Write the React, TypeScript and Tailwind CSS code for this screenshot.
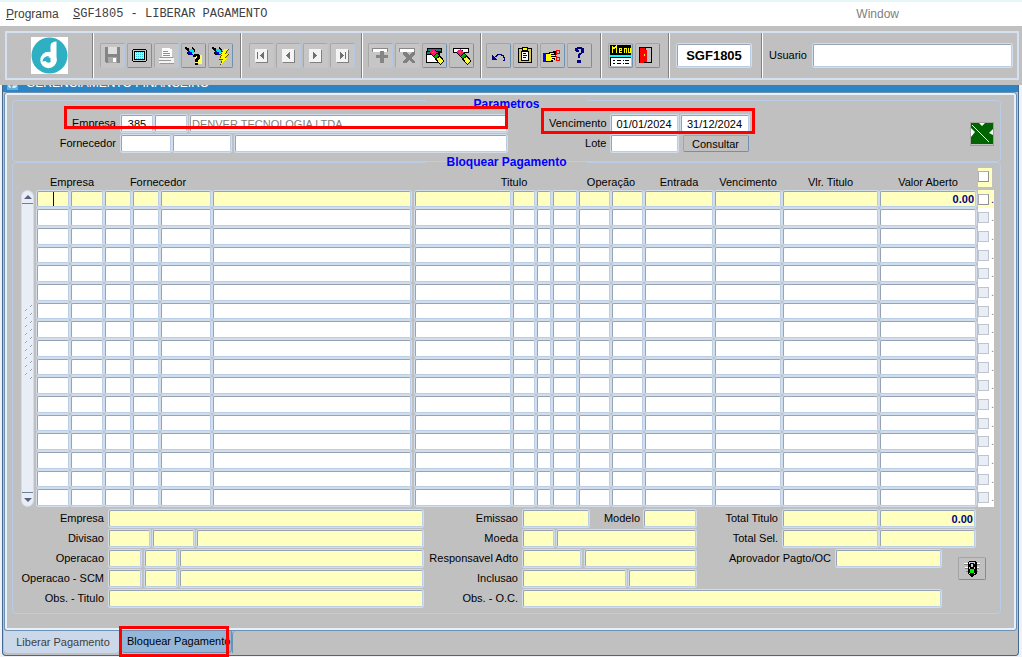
import React from "react";

const fieldBase =
  "block min-w-0 rounded-[2px] border border-t-[#96a3b4] border-l-[#96a3b4] border-r-[#b9cde6] border-b-[#b9cde6] shadow-[0_0_0_1px_#d2deec] px-px text-[11px] leading-3 outline-none";

type FieldProps = {
  id?: string;
  label?: string;
  className?: string;
  value?: string;
};

// white input of the parameters area
function Field({ id, label, className = "", value = "" }: FieldProps) {
  return (
    <input
      id={id}
      aria-label={label}
      defaultValue={value}
      className={`${fieldBase} h-[17px] bg-white ${className}`}
    />
  );
}

// yellow read only input
function Info({ id, label, className = "", value = "" }: FieldProps) {
  return (
    <input
      id={id}
      aria-label={label}
      readOnly
      defaultValue={value}
      className={`${fieldBase} h-[17px] bg-[#ffffc0] ${className}`}
    />
  );
}

function Label({ htmlFor, className = "", children }: { htmlFor: string; className?: string; children: React.ReactNode }) {
  return (
    <label htmlFor={htmlFor} className={`shrink-0 text-right whitespace-nowrap ${className}`}>
      {children}
    </label>
  );
}

function ToolButton({ label, disabled, children }: { label: string; disabled?: boolean; children: React.ReactNode }) {
  return (
    <button
      aria-label={label}
      disabled={disabled}
      className={
        disabled
          ? "h-[25px] w-[25px] shrink-0 rounded-[2px] border border-t-[#a8a8a8] border-l-[#a8a8a8] border-r-[#b4c8e2] border-b-[#b4c8e2] bg-[#c6c6c6]"
          : "h-[25px] w-[25px] shrink-0 rounded-[2px] border border-t-[#a4a4a4] border-l-[#a4a4a4] border-r-[#6d91b5] border-b-[#6d91b5] bg-[#c0c0c0]"
      }
    >
      <svg viewBox="0 0 23 23" className="block h-[23px] w-[23px]" shapeRendering="crispEdges">
        {children}
      </svg>
    </button>
  );
}

function Group({ className = "", children }: { className?: string; children: React.ReactNode }) {
  return (
    <div className={`flex items-center gap-0.5 border-r border-r-[#808080] shadow-[1px_0_0_#ffffff] ${className}`}>
      {children}
    </div>
  );
}

function NavIcon({ d }: { d: string }) {
  return (
    <>
      <rect x="6" y="6" width="12" height="13" fill="#808080" />
      <rect x="5" y="5" width="12" height="13" fill="#f4f4f4" />
      <path d={d} fill="#707070" />
    </>
  );
}

function Torch() {
  return (
    <>
      <path d="M3 3h2v1h2v2h2v1h-4v-1h-1v-1h-1z" fill="#000" />
      <path d="M7 5h4v1h1v3h-3v-1h-2z" fill="#00e0f0" />
      <path d="M6 7h2v1h2v2h1v1h-3v-1h-2z" fill="#0000d0" />
      <path d="M10 3h1v1h1v1h1v3h-1v-2h-1v-1h-1zM5 8h1v2h2v1h-2v-1h-1z" fill="#000" />
    </>
  );
}

function Pencil() {
  return (
    <>
      <path d="M9.500 7.500l10 11.500" stroke="#000" strokeWidth="6" />
      <path d="M8.500 6.500l3.500 4" stroke="#ff1080" strokeWidth="5" />
      <path d="M10 8l1 1" stroke="#ff5020" strokeWidth="2" />
      <path d="M12.500 11l2 2.300" stroke="#00b000" strokeWidth="4" />
      <path d="M15 14l4 4.600" stroke="#ffff30" strokeWidth="4" />
    </>
  );
}

function Toolbar() {
  return (
    <div className="pt-[5px] pr-[3px] pb-[5px] pl-[5px]">
      <div className="flex h-[49px] border-2 border-[#d5e1f0]">
        <Group className="w-[86px] shrink-0 justify-center">
          <svg viewBox="0 0 37 37" className="h-[37px] w-[37px]">
            <rect width="37" height="37" fill="#fff" />
            <circle cx="18.5" cy="18.5" r="18" fill="#2fafc2" />
            <path d="M19.500 9c0-3 2-4.500 6-4.500v20h-6z" fill="#fff" />
            <circle cx="17.500" cy="23" r="5.500" fill="none" stroke="#fff" strokeWidth="5.500" />
            <path d="M11.500 24.500c.5-4 3.500-5.500 7-5.500-2 1-2.500 2-3 5z" fill="#2fafc2" />
          </svg>
        </Group>
        <Group className="w-[148px] shrink-0 pl-[7px]">
          <ToolButton label="Salvar" disabled>
            <path d="M4 3h15v16h-14v-1h-1z" fill="#858585" />
            <rect x="7" y="3" width="9" height="7" fill="#dedede" />
            <rect x="7" y="13" width="9" height="6" fill="#aaa" />
            <rect x="12" y="14" width="3" height="4" fill="#fff" />
          </ToolButton>
          <ToolButton label="Tela">
            <path d="M5 5h13v1h1v11h-1v1h-13v-1h-1v-11h1z" fill="#000" />
            <rect x="5" y="6" width="13" height="11" fill="#c8c8c8" />
            <rect x="6" y="7" width="11" height="9" fill="#000" />
            <rect x="7" y="8" width="9" height="7" fill="#aff" />
            <path
              d="M8 8.500h1m1 0h1m1 0h1m1 0h1M8 10.500h1m1 0h1m1 0h1m1 0h1M8 12.500h1m1 0h1m1 0h1m1 0h1M8 14.500h1m1 0h1m1 0h1m1 0h1"
              stroke="#30c8e0"
            />
          </ToolButton>
          <ToolButton label="Imprimir" disabled>
            <path d="M7 4h8v1h2v8h-10z" fill="#fff" />
            <path d="M8 7.500h5M8 9.500h7M8 11.500h7" stroke="#909090" />
            <path d="M5 13h13v1h1v5h-15v-5h1z" fill="#f4f4f4" />
            <path d="M5 13.500h13M4 16.500h12M5 19.500h14" stroke="#999" />
          </ToolButton>
          <ToolButton label="Entrar consulta">
            <Torch />
            <path d="M13 11h7v9h-7z" fill="#ffff60" />
            <path d="M11 11h1v-1h5v1h1v4h-1v1h-1v2h-3v-3h1v-1h1v-2h-1v1h-3zM13 19h3v2h-3z" fill="#000" />
          </ToolButton>
          <ToolButton label="Executar consulta">
            <Torch />
            <path d="M15 5h5l-3 5h3l-3 4h2l-8 7 2-5h-3l2-5h-1z" fill="#604800" />
            <path d="M15 5h4l-3 5h3l-3 4h2l-6 6 2-5h-3l2-4h-1z" fill="#ff0" />
          </ToolButton>
        </Group>
        <Group className="w-[121px] shrink-0 pl-[8px]">
          <ToolButton label="Primeiro" disabled>
            <NavIcon d="M7 8h1v7h-1zM13 8h1v7h-1v-1h-1v-1h-1v-1h-1v-1h1v-1h1v-1h1z" />
          </ToolButton>
          <ToolButton label="Anterior" disabled>
            <NavIcon d="M12 8h1v7h-1v-1h-1v-1h-1v-1h-1v-1h1v-1h1v-1h1z" />
          </ToolButton>
          <ToolButton label="Proximo" disabled>
            <NavIcon d="M9 8h1v1h1v1h1v1h1v1h-1v1h-1v1h-1v1h-1z" />
          </ToolButton>
          <ToolButton label="Ultimo" disabled>
            <NavIcon d="M9 8h1v1h1v1h1v1h1v1h-1v1h-1v1h-1v1h-1zM14 8h1v7h-1z" />
          </ToolButton>
        </Group>
        <Group className="w-[119px] shrink-0 pl-[6px]">
          <ToolButton label="Inserir registro" disabled>
            <rect x="3" y="4" width="16" height="4" fill="#888" />
            <rect x="4" y="5" width="14" height="3" fill="#fff" />
            <path d="M11 7h4v4h4v3h-4v5h-4v-5h-4v-3h4z" fill="#858585" />
          </ToolButton>
          <ToolButton label="Remover registro" disabled>
            <rect x="3" y="4" width="16" height="4" fill="#888" />
            <rect x="4" y="5" width="14" height="3" fill="#fff" />
            <path d="M7 8h3l3 3 3-3h3v2l-4 4 4 4v1h-3l-3-3-3 3h-3v-2l3-3-3-3z" fill="#808080" />
          </ToolButton>
          <ToolButton label="Limpar bloco">
            <path d="M4 4h15v5h-2v10h-14v-12h1z" fill="#000" />
            <rect x="5" y="5" width="13" height="2" fill="#178080" />
            <rect x="4" y="8" width="11" height="2" fill="#178080" />
            <path d="M4 11h11v7h-11z" fill="#fff" />
            <Pencil />
          </ToolButton>
          <ToolButton label="Limpar registro">
            <rect x="3" y="4" width="16" height="5" fill="#000" />
            <rect x="4" y="5" width="14" height="3" fill="#fff" />
            <Pencil />
          </ToolButton>
        </Group>
        <Group className="w-[120px] shrink-0 pl-[5px]">
          <ToolButton label="Desfazer">
            <path d="M5 11h1v1h1v1h1v1h1v1h1v1h-5z" fill="#000080" />
            <path d="M8 12.500h1v-1h1v-1h4v1h2v2h1v3h-1" fill="none" stroke="#000080" />
          </ToolButton>
          <ToolButton label="Colar">
            <rect x="4" y="4" width="14" height="15" fill="#000" />
            <rect x="5" y="5" width="12" height="13" fill="#d8c850" />
            <rect x="8" y="3" width="6" height="4" fill="#000" />
            <rect x="9" y="4" width="4" height="2" fill="#ff0" />
            <rect x="7" y="7" width="8" height="10" fill="#000" />
            <rect x="8" y="8" width="6" height="8" fill="#fff" />
            <path d="M9 9.500h3M9 11.500h4M9 13.500h3" stroke="#000080" />
          </ToolButton>
          <ToolButton label="Recortar">
            <rect x="2" y="9" width="3" height="9" fill="#00f" />
            <path d="M5 9h3v-1h4v-1h3v2h1v4h-2v3h-2v2h-7z" fill="#000" />
            <path d="M5 10h4v-1h4v1h-3v1h6v1h-6v1h5v1h-4v1h2v1h-3v1h-5z" fill="#ff0" />
            <path d="M15.500 6.500h3v3h-3zM15.500 13.500h3v3h-3zM14 12l3-3M14 11l3 3" fill="none" stroke="#f00" />
          </ToolButton>
          <ToolButton label="Ajuda">
            <path d="M7 4h2v-1h5v1h2v5h-2v1h-1v1h-1v3h-2v-4h1v-1h2v-4h-3v1h1v2h-3v-1h-1z" fill="#000080" />
            <rect x="9" y="16" width="4" height="3" fill="#000080" />
          </ToolButton>
        </Group>
        <Group className="w-[68px] shrink-0 pl-[7px]">
          <button
            aria-label="Menu"
            className="flex h-[25px] w-[25px] shrink-0 items-center justify-center rounded-[2px] border border-t-[#a4a4a4] border-l-[#a4a4a4] border-r-[#6d91b5] border-b-[#6d91b5]"
          >
            <svg viewBox="0 0 21 21" className="h-[21px] w-[21px]" shapeRendering="crispEdges">
              <rect width="21" height="21" fill="#000" />
              <path d="M2 8v-7l2 3 2-3v7M9 5h2v-2h-2v4h3M14 8v-5h2v5M18 3v4h2v-4" fill="none" stroke="#ff0" />
              <rect x="0" y="10" width="21" height="2" fill="#0ff" />
              <rect x="1" y="13" width="20" height="8" fill="#fff" />
              <path d="M3 15.500h2m2 0h4m2 0h1m1 0h4M3 18.500h2m2 0h4m2 0h1m1 0h4" stroke="#000" />
            </svg>
          </button>
          <ToolButton label="Sair">
            <rect x="3" y="3" width="13" height="16" fill="#000" />
            <rect x="10" y="4" width="5" height="14" fill="#c0c0c0" />
            <path d="M4 4h5v2h2v12h-3v1h-4z" fill="#f00" />
            <rect x="8" y="10" width="1" height="2" fill="#ff0" />
          </ToolButton>
        </Group>
        <Group className="w-[93px] shrink-0 pl-[8px]">
          <input
            aria-label="Codigo do programa"
            readOnly
            defaultValue="SGF1805"
            className={`${fieldBase} h-[23px] w-[74px] bg-white text-center text-[13px] font-bold`}
          />
        </Group>
        <div className="flex min-w-0 flex-1 items-center gap-1.5 pr-[5px] pl-[7px]">
          <label htmlFor="usuario">Usuario</label>
          <input id="usuario" className={`${fieldBase} h-[23px] flex-1 bg-white`} />
        </div>
      </div>
    </div>
  );
}

function Parametros() {
  return (
    <fieldset className="min-w-0 rounded-[4px] border border-[#b9cde6]">
      <legend className="mx-auto h-3 w-[161px] pt-1 text-center text-[12px] leading-3 font-bold text-[#0000ff]">
        Parametros
      </legend>
      <div className="flex pt-[9px] pb-[9px]">
        <div className="relative flex w-1/2 flex-col gap-[3px]">
          <div className="flex items-center">
            <Label htmlFor="empresa" className="mr-[5px] w-[103px]">Empresa</Label>
            <Field id="empresa" value="385" className="mr-[2px] w-8 text-center" />
            <Field label="Filial" className="mr-[3px] w-8" />
            <Field label="Nome da empresa" value="DENVER TECNOLOGIA LTDA" className="flex-1 text-[#808080]" />
          </div>
          <div className="flex items-center">
            <Label htmlFor="fornecedor" className="mr-[5px] w-[103px]">Fornecedor</Label>
            <Field id="fornecedor" className="mr-[2px] w-[50px]" />
            <Field label="Loja do fornecedor" className="mr-[4px] w-[58px]" />
            <Field label="Nome do fornecedor" className="flex-1" />
          </div>
          <div className="pointer-events-none absolute -top-[9px] -right-px left-[51px] h-[23px] border-[3px] border-[#ff0000]" />
        </div>
        <div className="relative flex flex-col gap-[3px]">
          <div className="flex items-center">
            <Label htmlFor="vencimento" className="mr-[4px] w-[100px]">Vencimento</Label>
            <Field id="vencimento" value="01/01/2024" className="mr-[3px] w-[67px] text-center" />
            <Field label="Vencimento final" value="31/12/2024" className="w-[68px] text-center" />
          </div>
          <div className="flex items-center">
            <Label htmlFor="lote" className="mr-[4px] w-[100px]">Lote</Label>
            <Field id="lote" className="mr-[5px] w-[67px]" />
            <button className="h-[17px] w-[66px] rounded-[2px] border border-t-[#a4a4a4] border-l-[#a4a4a4] border-r-[#6d91b5] border-b-[#6d91b5] leading-3">
              Consultar
            </button>
          </div>
          <div className="pointer-events-none absolute -top-[7px] -right-[6px] left-[34px] h-[26px] border-[3px] border-[#ff0000]" />
        </div>
        <button
          aria-label="Exportar para Excel"
          className="mt-[7px] mr-[6px] ml-auto h-6 w-6 border border-t-[#a4a4a4] border-l-[#a4a4a4] border-r-[#8aa0b8] border-b-[#8aa0b8]"
        >
          <svg viewBox="0 0 22 22" className="block h-[22px] w-[22px]">
            <rect width="22" height="21" fill="#006400" />
            <path d="M8 0h6l-3 3zM0 5l4 4-4 5zM22 6v6l-4-2z" fill="#fff" />
            <path d="M1 2l17 17" stroke="#fff" />
          </svg>
        </button>
      </div>
    </fieldset>
  );
}

const columns = [
  { name: "Empresa", width: 34 },
  { name: "Filial", width: 34 },
  { name: "Fornecedor", width: 28 },
  { name: "Loja", width: 28 },
  { name: "Codigo", width: 52 },
  { name: "Nome", width: 202 },
  { name: "Titulo", width: 98 },
  { name: "Serie", width: 24 },
  { name: "Parcela", width: 16 },
  { name: "Tipo", width: 26 },
  { name: "Operação", width: 33 },
  { name: "Operação SCM", width: 33 },
  { name: "Entrada", width: 70 },
  { name: "Vencimento", width: 68 },
  { name: "Vlr. Titulo", width: 97 },
  { name: "Valor Aberto", width: 98 },
];

const rows = Array.from({ length: 17 }, (_, i) => i);

const checkBase = "block h-[11px] w-[11px] shrink-0 appearance-none border";

function ScrollBar() {
  return (
    <div className="mt-[22px] mr-0.5 ml-2 flex w-[13px] shrink-0 flex-col rounded-full border border-[#cfdcec] bg-[#e8edf6]">
      <button aria-label="Subir" className="flex h-[13px] items-center justify-center border-b border-[#70809a]">
        <svg viewBox="0 0 8 4" className="h-1 w-2">
          <path d="M0 4l4-4 4 4z" fill="#5a6080" />
        </svg>
      </button>
      <div className="flex flex-1 items-center justify-center pb-2.5">
        <svg viewBox="0 0 10 76" className="h-[76px] w-[10px]" shapeRendering="crispEdges">
          {Array.from({ length: 19 }, (_, i) => (
            <g key={i}>
              <rect x={i % 2 ? 2 : 7} y={i * 4} width="2" height="2" fill="#ffffff" />
              <rect x={i % 2 ? 3 : 8} y={i * 4} width="1" height="1" fill="#7f9dbd" />
              <rect x={i % 2 ? 2 : 7} y={i * 4 + 1} width="1" height="1" fill="#7f9dbd" />
            </g>
          ))}
        </svg>
      </div>
      <button aria-label="Descer" className="flex h-[14px] items-center justify-center border-t border-[#70809a]">
        <svg viewBox="0 0 8 4" className="h-1 w-2">
          <path d="M0 0l4 4 4-4z" fill="#5a6080" />
        </svg>
      </button>
    </div>
  );
}

function Titulos() {
  return (
    <table className="w-full table-fixed border-separate border-spacing-0">
      <colgroup>
        {columns.map((c) => (
          <col key={c.name} style={{ width: c.width }} />
        ))}
        <col className="w-[17px]" />
      </colgroup>
      <thead>
        <tr className="h-[22px] leading-[13px] [&>th]:p-0 [&>th]:pt-1.5 [&>th]:font-normal [&>th]:whitespace-nowrap">
          <th colSpan={2}>
            <span className="pl-1">Empresa</span>
          </th>
          <th colSpan={3}>Fornecedor</th>
          <td />
          <th colSpan={4}>
            <span className="pl-9">Titulo</span>
          </th>
          <th colSpan={2}>Operação</th>
          <th>Entrada</th>
          <th>Vencimento</th>
          <th>Vlr. Titulo</th>
          <th>Valor Aberto</th>
          <td className="py-0 pr-0.5 pl-px align-top">
            <div className="h-[19px] bg-[#ffffc0] pt-[3px]">
              <input
                type="checkbox"
                aria-label="Selecionar todos"
                className={`${checkBase} border-t-[#b0b0b0] border-l-[#b0b0b0] border-r-[#8f9299] border-b-[#8f9299] bg-white`}
              />
            </div>
          </td>
        </tr>
      </thead>
      <tbody>
        {rows.map((i) => (
          <tr key={i} className={i % 3 === 0 ? "h-[18px]" : "h-[19px]"}>
            {columns.map((c, j) => (
              <td key={c.name} className={c.name === "Nome" ? "relative py-0 pr-[3px] pl-px" : "relative px-px py-0"}>
                <input
                  aria-label={`${c.name} ${i + 1}`}
                  defaultValue={i === 0 && j === 15 ? "0.00" : ""}
                  className={`${fieldBase} w-full text-right font-bold text-[#000080] ${i === 0 ? "bg-[#ffffc0]" : "bg-white"} ${i % 3 === 0 ? "h-4" : "h-[17px]"}`}
                />
                {i === 0 && j === 0 && <span className="absolute top-0.5 left-[17px] h-[14px] w-px bg-[#000080]" />}
              </td>
            ))}
            <td className="py-0 pr-0 pl-px">
              <div
                className={`flex items-center justify-between ${i === 0 ? "bg-[#ffffc0]" : "bg-white"} ${i % 3 === 0 ? "h-[18px]" : "h-[19px]"}`}
              >
                <input
                  type="checkbox"
                  id={`sel-${i}`}
                  aria-label={`Selecionar ${i + 1}`}
                  className={`${checkBase} ${i === 0 ? "border-t-[#b0b0b0] border-l-[#b0b0b0] border-r-[#8f9299] border-b-[#8f9299] bg-white" : "border-[#c0c4cc] bg-[#e8edf6]"}`}
                />
                <label htmlFor={`sel-${i}`} className={i === 0 ? "text-[#000080]" : "text-[#808080]"}>
                  .
                </label>
              </div>
            </td>
          </tr>
        ))}
      </tbody>
    </table>
  );
}

function Detalhes() {
  return (
    <div className="mt-[3px] grid grid-cols-[minmax(0,410fr)_minmax(0,577fr)]">
      <div className="flex flex-col gap-[3px]">
        <div className="flex items-center">
          <Label htmlFor="d-empresa" className="mr-[5px] w-[91px]">Empresa</Label>
          <Info id="d-empresa" className="flex-1" />
        </div>
        <div className="flex items-center">
          <Label htmlFor="divisao" className="mr-[5px] w-[91px]">Divisao</Label>
          <Info id="divisao" className="mr-[3px] w-[41px]" />
          <Info label="Subdivisao" className="mr-[3px] w-[41px]" />
          <Info label="Nome da divisao" className="flex-1" />
        </div>
        <div className="flex items-center">
          <Label htmlFor="operacao" className="mr-[5px] w-[91px]">Operacao</Label>
          <Info id="operacao" className="mr-[4px] w-8" />
          <Info label="Tipo de operacao" className="mr-[3px] w-8" />
          <Info label="Nome da operacao" className="flex-1" />
        </div>
        <div className="flex items-center">
          <Label htmlFor="scm" className="mr-[5px] w-[91px]">Operacao - SCM</Label>
          <Info id="scm" className="mr-[4px] w-8" />
          <Info label="Tipo SCM" className="mr-[3px] w-8" />
          <Info label="Nome SCM" className="flex-1" />
        </div>
        <div className="flex items-center">
          <Label htmlFor="obs-titulo" className="mr-[5px] w-[91px]">Obs. - Titulo</Label>
          <Info id="obs-titulo" className="flex-1" />
        </div>
      </div>

      <div className="flex flex-col gap-[3px]">
        <div className="grid grid-cols-[minmax(0,273fr)_minmax(0,304fr)]">
          <div className="flex flex-col gap-[3px]">
            <div className="flex items-center">
              <Label htmlFor="emissao" className="mr-[5px] w-[95px]">Emissao</Label>
              <Info id="emissao" className="w-[66px]" />
              <Label htmlFor="modelo" className="mr-[4px] ml-auto">Modelo</Label>
              <Info id="modelo" className="w-[52px]" />
            </div>
            <div className="flex items-center">
              <Label htmlFor="moeda" className="mr-[5px] w-[95px]">Moeda</Label>
              <Info id="moeda" className="mr-[3px] w-[31px]" />
              <Info label="Nome da moeda" className="flex-1" />
            </div>
            <div className="flex items-center">
              <Label htmlFor="responsavel" className="mr-[5px] w-[95px]">Responsavel Adto</Label>
              <Info id="responsavel" className="mr-[4px] w-[58px]" />
              <Info label="Nome do responsavel" className="flex-1" />
            </div>
            <div className="flex items-center">
              <Label htmlFor="inclusao" className="mr-[5px] w-[95px]">Inclusao</Label>
              <Info id="inclusao" className="mr-[3px] w-[103px]" />
              <Info label="Usuario de inclusao" className="flex-1" />
            </div>
          </div>

          <div className="flex flex-col gap-[3px]">
            <div className="flex items-center">
              <Label htmlFor="total-titulo" className="mr-[5px] w-[82px]">Total Titulo</Label>
              <Info id="total-titulo" className="mr-[2px] w-[95px]" />
              <Info label="Total aberto" value="0.00" className="w-[95px] text-right font-bold text-[#000080]" />
            </div>
            <div className="flex items-center">
              <Label htmlFor="total-sel" className="mr-[5px] w-[82px]">Total Sel.</Label>
              <Info id="total-sel" className="mr-[2px] w-[95px]" />
              <Info label="Total aberto selecionado" className="w-[95px]" />
            </div>
            <div className="flex items-start">
              <Label htmlFor="aprovador" className="mr-[5px] w-[135px]">Aprovador Pagto/OC</Label>
              <Info id="aprovador" className="w-[105px]" />
              <button
                aria-label="Liberar"
                className="mt-[7px] mr-[14px] ml-auto flex h-[23px] w-[28px] items-center justify-center rounded-[2px] border border-t-[#a4a4a4] border-l-[#a4a4a4] border-r-[#6d91b5] border-b-[#6d91b5]"
              >
                <svg viewBox="0 0 16 16" className="h-4 w-4" shapeRendering="crispEdges">
                  <path d="M0 3h5v1h-5zM1 7h4v1h-4zM12 3h4v1h-4zM12 7h3v1h-3zM2 10h3v1h-3zM12 10h2v1h-2z" fill="#808080" />
                  <path d="M0 2h5v1h-5zM1 6h4v1h-4zM13 2h3v1h-3zM13 6h2v1h-2z" fill="#fff" />
                  <path d="M4 1h1v-1h7v1h1v12h-1v1h-7v-1h-1z" fill="#000" />
                  <path d="M5 1h6v12h-6z" fill="#d0d0d0" />
                  <path d="M6 2h4v1h1v3h-1v1h-4v-1h-1v-3h1z" fill="#000" />
                  <path d="M7 3h2v3h-2z" fill="#d0d0d0" />
                  <path d="M6 7h4v1h1v4h-1v1h-4v-1h-1v-4h1z" fill="#000" />
                  <path d="M6 8h4v4h-4z" fill="#00f000" />
                  <path d="M6 14h4v1h-1v1h-2v-1h-1z" fill="#000" />
                </svg>
              </button>
            </div>
          </div>
        </div>
        <div className="flex items-center pr-[59px]">
          <Label htmlFor="obs-oc" className="mr-[5px] w-[95px]">Obs. - O.C.</Label>
          <Info id="obs-oc" className="flex-1" />
        </div>
      </div>
    </div>
  );
}

export default function App() {
  return (
    <div className="min-h-screen bg-[#eef2f8] font-['Liberation_Sans',Arial,sans-serif] text-[11px] leading-[17px] text-black">
      <div className="bg-[#c0c0c0]">
        <div className="h-0.5 bg-[#e6f5f5]" />
        <nav className="flex h-6 items-center bg-white pl-[6px] text-[12px] text-[#404040]">
          <button className="w-[67px] text-left">
            <span className="underline">P</span>rograma
          </button>
          <button className="font-['Liberation_Mono',monospace] whitespace-pre">
            <span className="underline">S</span>GF1805 - LIBERAR PAGAMENTO
          </button>
          <button className="mr-[123px] ml-auto text-[#808080]">Window</button>
        </nav>
        <Toolbar />
      </div>

      <main className="mr-[3px] ml-0.5 rounded-b-[4px] border border-t-0 border-[#45688f] bg-[#c0c0c0]">
        <div className="flex h-[7px] items-end gap-2 overflow-hidden bg-[#2b84c4] pb-1 pl-1 text-[12px] leading-[10px] text-white">
          <svg viewBox="0 0 11 8" className="-mb-0.5 h-2 w-[11px] shrink-0">
            <rect width="11" height="8" fill="#5fb0e0" />
            <path d="M2 2v3h2M7 3v3M9 2v3h-4" fill="none" stroke="#fff" />
          </svg>
          <h1>GERENCIAMENTO FINANCEIRO</h1>
        </div>

        <div className="mx-px rounded-[3px] border border-[#6d91b5] p-px pb-4 shadow-[inset_0_0_0_2px_#e8f0fa]">
          <div className="pr-[14px] pl-1.5">
            <Parametros />
            <fieldset className="-mt-1.5 min-w-0 rounded-[4px] border border-[#b9cde6] pb-[6px]">
              <legend className="mx-auto w-[161px] text-center text-[12px] leading-3 font-bold text-[#0000ff]">
                Bloquear Pagamento
              </legend>
              <div className="flex pr-1.5">
                <ScrollBar />
                <div className="min-w-0 flex-1">
                  <Titulos />
                </div>
              </div>
              <Detalhes />
            </fieldset>
          </div>
        </div>

        <div className="flex h-6 items-start pl-px">
          <button className="h-[22px] w-[115px] rounded-b-[4px] bg-[#cad8ea] pl-[3px] text-[#404040]">
            Liberar Pagamento
          </button>
          <div className="relative ml-0.5">
            <button className="h-[22px] w-[111px] rounded-b-[4px] border-r border-b border-[#6d91b5] bg-[#94b7d9] pl-[6px] text-left whitespace-nowrap">
              Bloquear Pagamento
            </button>
            <div className="pointer-events-none absolute -top-[5px] right-[3px] -left-0.5 h-[31px] border-[3px] border-[#ff0000]" />
          </div>
          <div className="h-[22px] w-2 rounded-tl-[4px] border-l border-[#6d91b5]" />
        </div>
      </main>
    </div>
  );
}
